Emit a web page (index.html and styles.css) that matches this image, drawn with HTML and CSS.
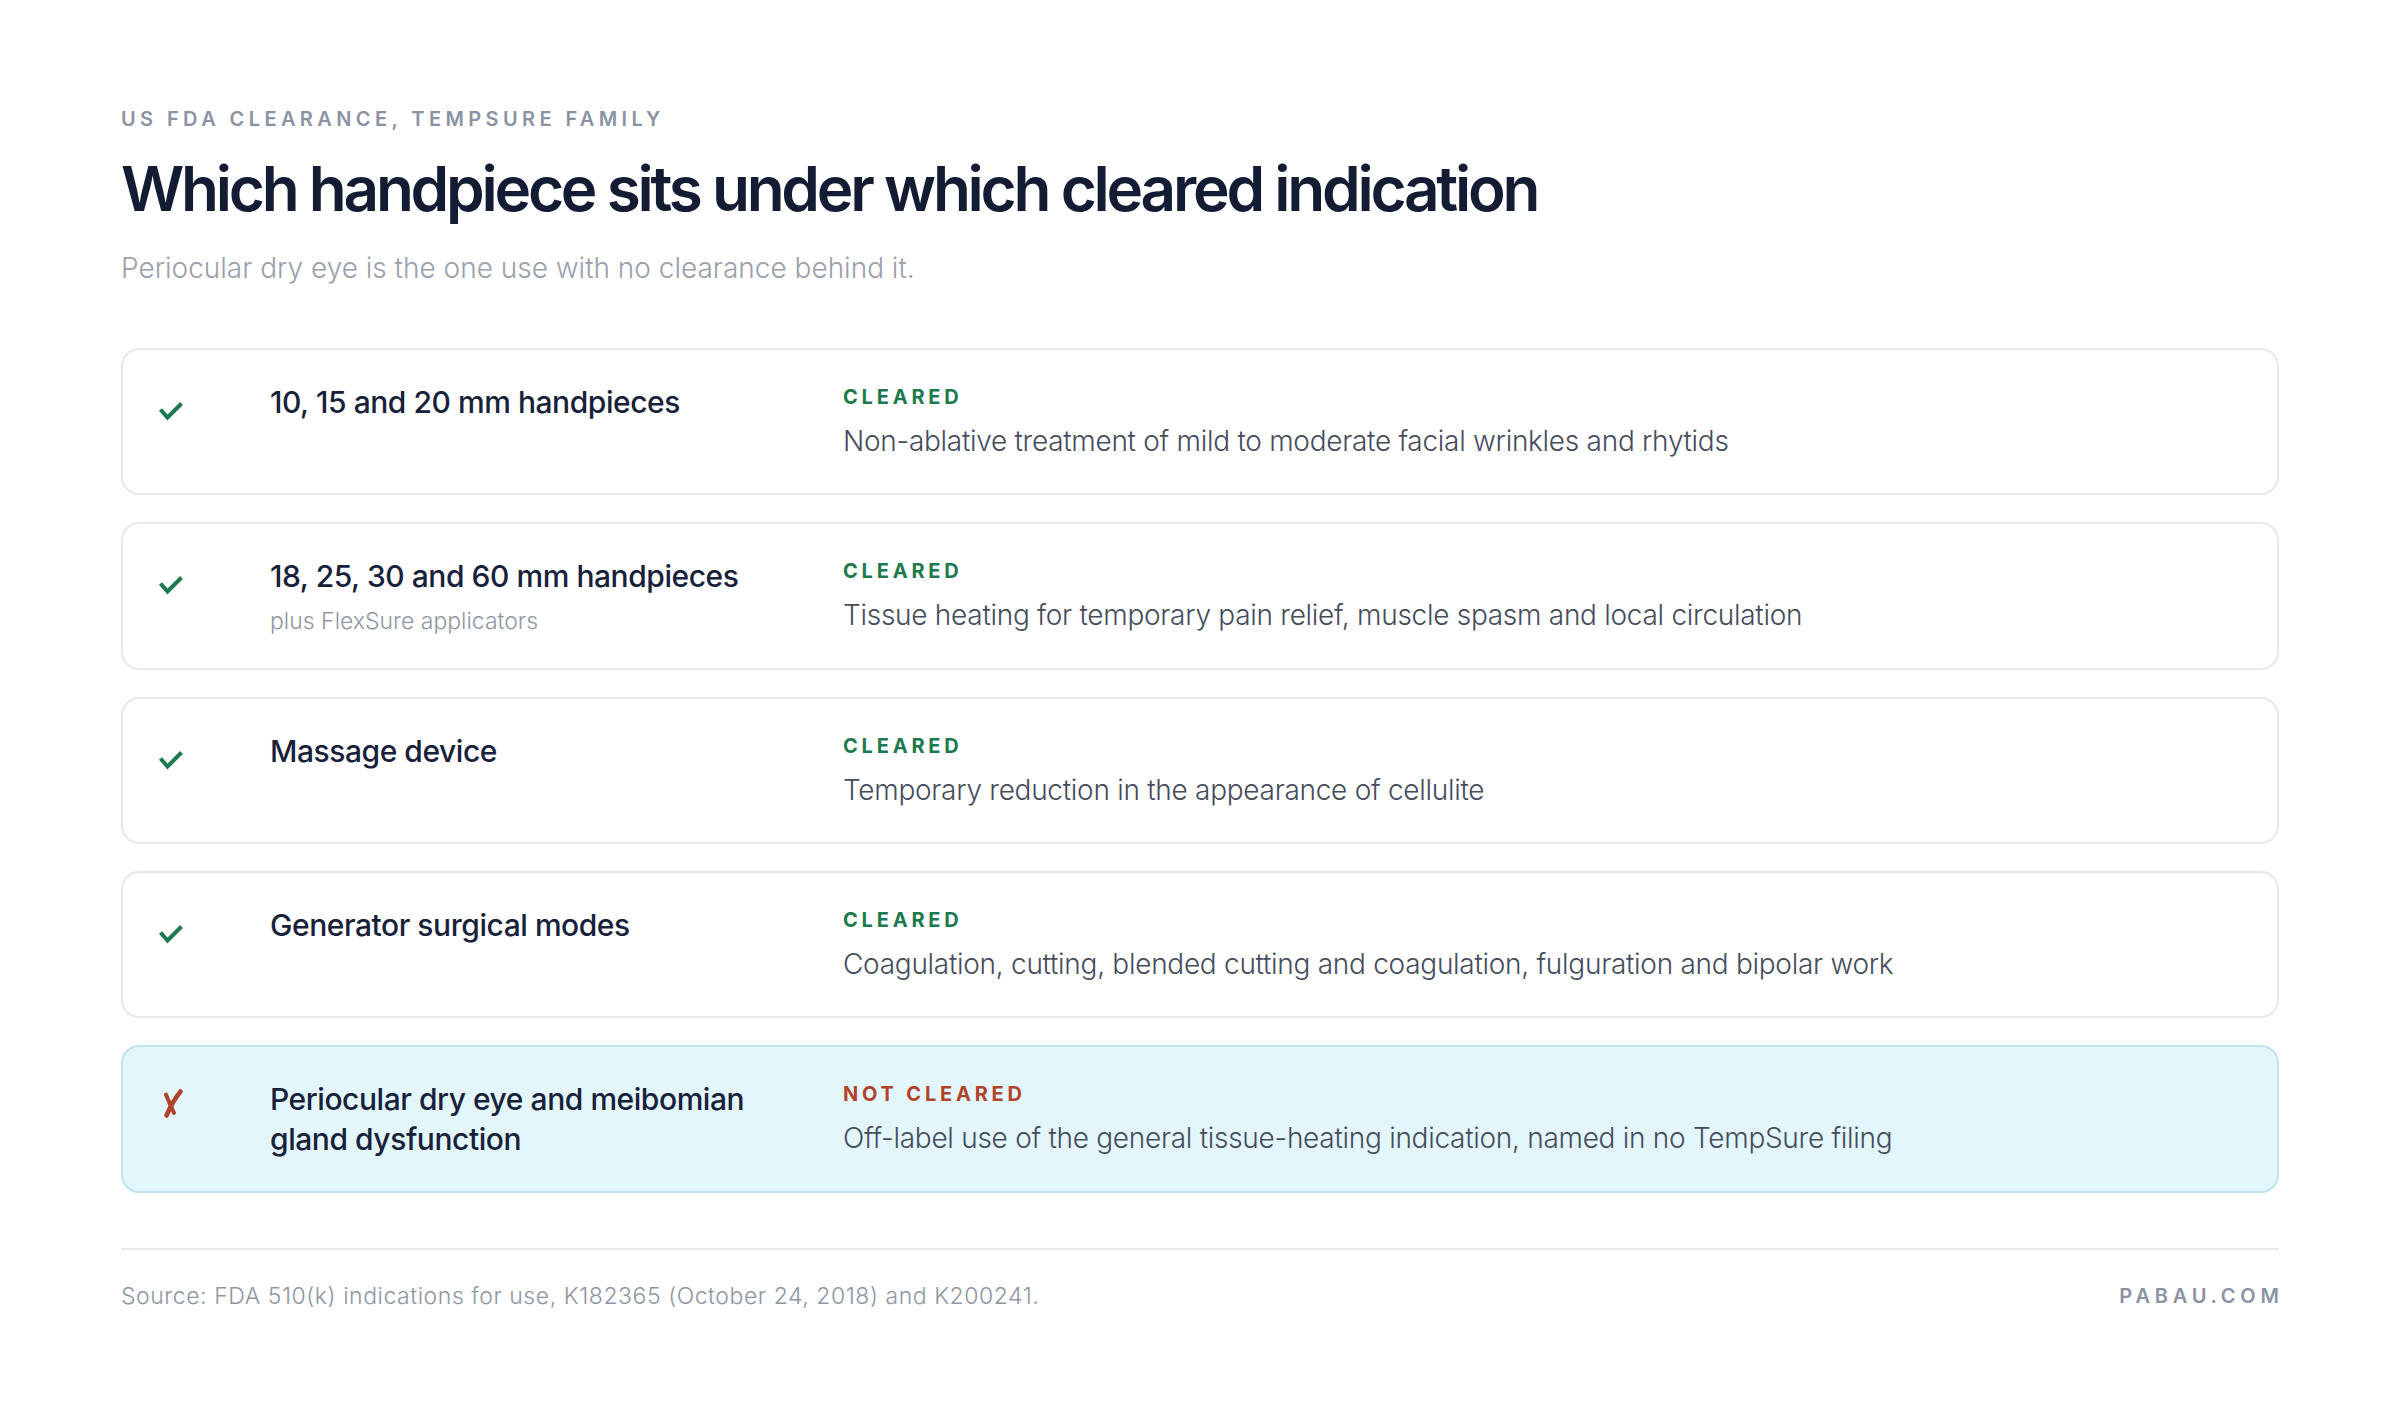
FILE: index.html
```html
<!DOCTYPE html>
<html lang="en">
<head>
<meta charset="utf-8">
<title>TempSure FDA clearance</title>
<link rel="stylesheet" href="styles.css">
</head>
<body>
<main class="page">
  <header class="intro">
    <div class="eyebrow">US FDA clearance, TempSure family</div>
    <h1 class="title">Which handpiece sits under which cleared indication</h1>
    <p class="lede">Periocular dry eye is the one use with no clearance behind it.</p>
  </header>

  <section class="rows">
    <article class="row">
      <div class="mark"><svg class="icon-ok" viewBox="0 0 26 20" width="26" height="20"><path d="M2.5 8.5 L9.5 16.5 L23.5 2.5" fill="none" stroke="currentColor" stroke-width="4" stroke-linecap="butt" stroke-linejoin="miter"/></svg></div>
      <div class="device">
        <div class="device-name">10, 15 and 20 mm handpieces</div>
      </div>
      <div class="use">
        <div class="status status-ok">Cleared</div>
        <div class="use-text">Non-ablative treatment of mild to moderate facial wrinkles and rhytids</div>
      </div>
    </article>

    <article class="row">
      <div class="mark"><svg class="icon-ok" viewBox="0 0 26 20" width="26" height="20"><path d="M2.5 8.5 L9.5 16.5 L23.5 2.5" fill="none" stroke="currentColor" stroke-width="4" stroke-linecap="butt" stroke-linejoin="miter"/></svg></div>
      <div class="device">
        <div class="device-name">18, 25, 30 and 60 mm handpieces</div>
        <div class="device-note">plus FlexSure applicators</div>
      </div>
      <div class="use">
        <div class="status status-ok">Cleared</div>
        <div class="use-text">Tissue heating for temporary pain relief, muscle spasm and local circulation</div>
      </div>
    </article>

    <article class="row">
      <div class="mark"><svg class="icon-ok" viewBox="0 0 26 20" width="26" height="20"><path d="M2.5 8.5 L9.5 16.5 L23.5 2.5" fill="none" stroke="currentColor" stroke-width="4" stroke-linecap="butt" stroke-linejoin="miter"/></svg></div>
      <div class="device">
        <div class="device-name">Massage device</div>
      </div>
      <div class="use">
        <div class="status status-ok">Cleared</div>
        <div class="use-text">Temporary reduction in the appearance of cellulite</div>
      </div>
    </article>

    <article class="row">
      <div class="mark"><svg class="icon-ok" viewBox="0 0 26 20" width="26" height="20"><path d="M2.5 8.5 L9.5 16.5 L23.5 2.5" fill="none" stroke="currentColor" stroke-width="4" stroke-linecap="butt" stroke-linejoin="miter"/></svg></div>
      <div class="device">
        <div class="device-name">Generator surgical modes</div>
      </div>
      <div class="use">
        <div class="status status-ok">Cleared</div>
        <div class="use-text">Coagulation, cutting, blended cutting and coagulation, fulguration and bipolar work</div>
      </div>
    </article>

    <article class="row row-flag">
      <div class="mark"><svg class="icon-no" viewBox="0 0 24 32" width="24" height="32"><path d="M20.5 3.5 C16 9 11 17 6.5 27.5" fill="none" stroke="currentColor" stroke-width="4.6" stroke-linecap="round"/><path d="M6 6.5 C8.5 13 11.5 19.5 14 25" fill="none" stroke="currentColor" stroke-width="4" stroke-linecap="round"/></svg></div>
      <div class="device">
        <div class="device-name">Periocular dry eye and meibomian gland dysfunction</div>
      </div>
      <div class="use">
        <div class="status status-no">Not cleared</div>
        <div class="use-text">Off-label use of the general tissue-heating indication, named in no TempSure filing</div>
      </div>
    </article>
  </section>

  <footer class="foot">
    <div class="source">Source: FDA 510(k) indications for use, K182365 (October 24, 2018) and K200241.</div>
    <div class="brand">pabau.com</div>
  </footer>
</main>
</body>
</html>
```

FILE: styles.css
```css
* { box-sizing: border-box; }

html, body {
  margin: 0;
  padding: 0;
  background: #ffffff;
}

body {
  font-family: Inter, "Noto Sans", "Liberation Sans", sans-serif;
  color: #141c33;
}

.page {
  padding: 104px 121px 0 121px;
}

.eyebrow {
  font-size: 20px;
  line-height: 30px;
  font-weight: 600;
  letter-spacing: 0.22em;
  text-transform: uppercase;
  color: #8b93a2;
}

.title {
  margin: 17px 0 0 0;
  font-size: 62px;
  line-height: 76px;
  font-weight: 600;
  letter-spacing: -0.052em;
  color: #131c33;
}

.lede {
  margin: 21px 0 0 0;
  font-size: 28px;
  line-height: 40px;
  font-weight: 300;
  color: #9aa0ac;
}

.rows {
  margin-top: 60px;
  display: flex;
  flex-direction: column;
  gap: 27px;
}

.row {
  display: grid;
  grid-template-columns: 110px 573px 1fr;
  padding: 32px 36px 32px 37px;
  border: 2px solid #e6e8ed;
  border-radius: 18px;
  background: #ffffff;
}

.row-flag {
  background: #e3f6fb;
  border-color: #bde4f0;
}

.mark {
  height: 40px;
  padding-top: 19px;
  color: #1d7a4e;
}

.mark svg { display: block; }

.icon-ok { margin-left: -2px; }

.row-flag .mark {
  padding-top: 9px;
  color: #b2432b;
}

.icon-no { margin-left: 0; }

.device-name {
  font-size: 30px;
  line-height: 40px;
  font-weight: 500;
  letter-spacing: -0.015em;
  color: #18213a;
  padding-right: 60px;
}

.device-note {
  margin-top: 10px;
  font-size: 23px;
  line-height: 30px;
  font-weight: 300;
  color: #9097a3;
}

.status {
  font-size: 20px;
  line-height: 30px;
  font-weight: 700;
  letter-spacing: 0.19em;
  text-transform: uppercase;
}

.status-ok { color: #1d7a4e; }
.status-no { color: #b2432b; }

.use-text {
  margin-top: 9px;
  font-size: 28px;
  line-height: 40px;
  font-weight: 300;
  letter-spacing: -0.01em;
  color: #464c5c;
}

.foot {
  margin-top: 55px;
  border-top: 2px solid #e6e8ed;
  padding-top: 31px;
  display: flex;
  justify-content: space-between;
  align-items: center;
}

.source {
  font-size: 23px;
  line-height: 30px;
  font-weight: 300;
  letter-spacing: 0.024em;
  color: #8f96a3;
}

.brand {
  font-size: 20px;
  line-height: 30px;
  font-weight: 600;
  letter-spacing: 0.24em;
  margin-right: -0.24em;
  text-transform: uppercase;
  color: #8b93a2;
}
```
